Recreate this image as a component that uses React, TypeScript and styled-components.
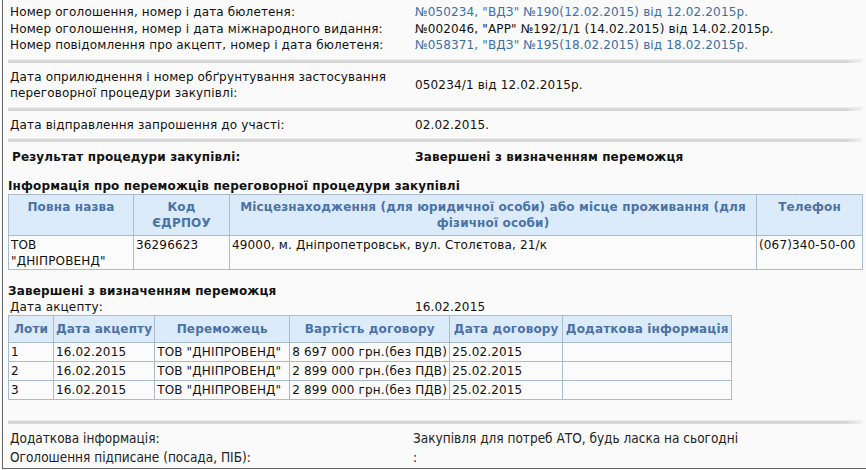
import styled, { createGlobalStyle } from 'styled-components';

const winners = [
  { lot: '1', date: '16.02.2015', winner: 'ТОВ "ДНІПРОВЕНД"', price: '8 697 000 грн.(без ПДВ)', contract: '25.02.2015' },
  { lot: '2', date: '16.02.2015', winner: 'ТОВ "ДНІПРОВЕНД"', price: '2 899 000 грн.(без ПДВ)', contract: '25.02.2015' },
  { lot: '3', date: '16.02.2015', winner: 'ТОВ "ДНІПРОВЕНД"', price: '2 899 000 грн.(без ПДВ)', contract: '25.02.2015' },
];

const WINNER_COLS = [125, 96, 527, 106];
const LOT_COLS = [45, 100, 135, 160, 113, 169];

export default function App() {
  return (
    <>
      <GlobalStyle />
      <Page>
        <InfoGrid>
          <Label>Номер оголошення, номер і дата бюлетеня:</Label>
          <Value link>№050234, "ВДЗ" №190(12.02.2015) від 12.02.2015р.</Value>
          <Label>Номер оголошення, номер і дата міжнародного видання:</Label>
          <Value>№002046, "АРР" №192/1/1 (14.02.2015) від 14.02.2015р.</Value>
          <Label>Номер повідомлення про акцепт, номер і дата бюлетеня:</Label>
          <Value link>№058371, "ВДЗ" №195(18.02.2015) від 18.02.2015р.</Value>
        </InfoGrid>
        <Separator />
        <InfoGrid>
          <Label>
            Дата оприлюднення і номер обґрунтування застосування
            <br />
            переговорної процедури закупівлі:
          </Label>
          <Value center>050234/1 від 12.02.2015р.</Value>
        </InfoGrid>
        <Separator />
        <InfoGrid>
          <Label>Дата відправлення запрошення до участі:</Label>
          <Value>02.02.2015.</Value>
        </InfoGrid>
        <Separator />
        <InfoGrid>
          <Label bold>Результат процедури закупівлі:</Label>
          <Value bold>Завершені з визначенням переможця</Value>
        </InfoGrid>

        <SectionTitle>Інформація про переможців переговорної процедури закупівлі</SectionTitle>
        <DataTable>
          <colgroup>
            {WINNER_COLS.map((w, i) => (
              <col key={i} style={{ width: w }} />
            ))}
          </colgroup>
          <thead>
            <tr>
              <Th>Повна назва</Th>
              <Th>Код ЄДРПОУ</Th>
              <Th>Місцезнаходження (для юридичної особи) або місце проживання (для фізичної особи)</Th>
              <Th>Телефон</Th>
            </tr>
          </thead>
          <tbody>
            <tr>
              <Td tall>ТОВ "ДНІПРОВЕНД"</Td>
              <Td tall>36296623</Td>
              <Td tall>49000, м. Дніпропетровськ, вул. Столєтова, 21/к</Td>
              <Td tall>(067)340-50-00</Td>
            </tr>
          </tbody>
        </DataTable>

        <SectionTitle gap>Завершені з визначенням переможця</SectionTitle>
        <InfoGrid>
          <Label>Дата акцепту:</Label>
          <Value>16.02.2015</Value>
        </InfoGrid>
        <DataTable>
          <colgroup>
            {LOT_COLS.map((w, i) => (
              <col key={i} style={{ width: w }} />
            ))}
          </colgroup>
          <thead>
            <tr>
              <Th short>Лоти</Th>
              <Th short>Дата акцепту</Th>
              <Th short>Переможець</Th>
              <Th short>Вартість договору</Th>
              <Th short>Дата договору</Th>
              <Th short>Додаткова інформація</Th>
            </tr>
          </thead>
          <tbody>
            {winners.map((w) => (
              <tr key={w.lot}>
                <Td>{w.lot}</Td>
                <Td>{w.date}</Td>
                <Td>{w.winner}</Td>
                <Td>{w.price}</Td>
                <Td>{w.contract}</Td>
                <Td />
              </tr>
            ))}
          </tbody>
        </DataTable>

        <Separator wide />
        <FooterGrid>
          <FooterText>Додаткова інформація:</FooterText>
          <FooterText>Закупівля для потреб АТО, будь ласка на сьогодні</FooterText>
          <FooterText>Оголошення підписане (посада, ПІБ):</FooterText>
          <FooterText>:</FooterText>
        </FooterGrid>
      </Page>
    </>
  );
}

//styles

const GlobalStyle = createGlobalStyle`
  body {
    margin: 0;
    background: #fafafa;
    font-family: 'DejaVu Sans', Verdana, sans-serif;
    font-size: 12px;
    letter-spacing: 0.15px;
    color: #111;
  }
`;

const Page = styled.div`
  margin-left: 2px;
  height: 469px;
  border-left: 1px solid #666;
  border-bottom: 1px solid #666;
  padding: 4px 0 0 5px;
  box-sizing: border-box;
  overflow: hidden;
`;

const InfoGrid = styled.div`
  display: grid;
  grid-template-columns: 405px 1fr;
  padding-left: 2px;
  line-height: 16.5px;
`;

const Label = styled.div<{ bold?: boolean }>`
  font-weight: ${(p) => (p.bold ? 'bold' : 'normal')};
  padding-left: ${(p) => (p.bold ? '2px' : '0')};
  margin-top: ${(p) => (p.bold ? '1px' : '0')};
`;

const Value = styled.div<{ link?: boolean; bold?: boolean; center?: boolean }>`
  color: ${(p) => (p.link ? '#3b6fa6' : '#111')};
  font-weight: ${(p) => (p.bold ? 'bold' : 'normal')};
  align-self: ${(p) => (p.center ? 'center' : 'start')};
  margin-top: ${(p) => (p.bold ? '1px' : '0')};
`;

const Separator = styled.div<{ wide?: boolean }>`
  height: 3px;
  margin: ${(p) => (p.wide ? '20px 4px 5px 0' : '5px 4px 6px 0')};
  background: linear-gradient(to right, #d6d6d6 0, #d6d6d6 98%, #f2f2f2 100%);
  border-top: 1px solid #ececec;
`;

const SectionTitle = styled.div<{ gap?: boolean }>`
  font-weight: bold;
  line-height: 15px;
  margin-top: ${(p) => (p.gap ? '14px' : '13px')};
`;

const DataTable = styled.table`
  border-collapse: collapse;
  table-layout: fixed;
  background: #fbfbfb;
  font-size: 12px;
`;

const Th = styled.th<{ short?: boolean }>`
  background: #dcebf9;
  color: #4b72a6;
  font-weight: bold;
  text-align: center;
  vertical-align: top;
  border: 1px solid #a9bccf;
  padding: ${(p) => (p.short ? '5px 2px' : '4px 6px')};
  line-height: 16px;
  white-space: ${(p) => (p.short ? 'nowrap' : 'normal')};
`;

const Td = styled.td<{ tall?: boolean }>`
  border: 1px solid #a9bccf;
  padding: ${(p) => (p.tall ? '1px 3px 0 2px' : '1px 2px 1px 2px')};
  line-height: 16px;
  vertical-align: top;
  white-space: ${(p) => (p.tall ? 'normal' : 'nowrap')};
  overflow: hidden;
`;

const FooterGrid = styled.div`
  display: grid;
  grid-template-columns: 403px 1fr;
  padding-left: 2px;
  line-height: 19px;
`;

const FooterText = styled.div`
  font-family: 'DejaVu Sans Condensed', 'Liberation Sans Narrow', sans-serif;
  font-size: 13.5px;
  letter-spacing: 0;
  color: #222;
`;
